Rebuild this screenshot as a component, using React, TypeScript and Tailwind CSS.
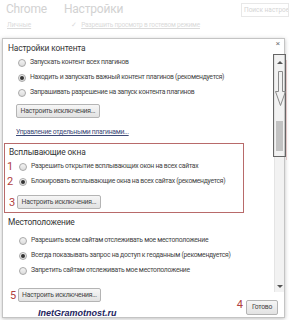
import React from "react";

const F = { fontFamily: 'Roboto, "Noto Sans", sans-serif' };

function Radio({ on }: { on?: boolean }) {
  return (
    <span className="w-[8px] h-[8px] rounded-full border border-[#a8a8a8] bg-gradient-to-b from-[#f4f4f4] to-[#dcdcdc] flex items-center justify-center shrink-0">
      {on && <span className="w-[4px] h-[4px] rounded-full bg-[#333]" />}
    </span>
  );
}

function Num({ n, w }: { n?: string; w: string }) {
  return (
    <span className={"shrink-0 text-[11px] leading-none text-[#b04040] " + w}>{n ?? ""}</span>
  );
}

function Row({ text, on, num }: { text: string; on?: boolean; num?: string }) {
  return (
    <div className="h-[15px] flex items-center">
      <span className="w-[3px] shrink-0" />
      <Num n={num} w="w-[12px]" />
      <Radio on={on} />
      <span className="ml-[4px] text-[6.8px] tracking-[-0.28px] text-[#444] whitespace-nowrap">{text}</span>
    </div>
  );
}

function Btn({ text, className = "" }: { text: string; className?: string }) {
  return (
    <div
      className={
        "h-[14px] shrink-0 border border-[#b4b4b4] rounded-[2px] bg-gradient-to-b from-[#f6f6f6] to-[#e2e2e2] flex items-center justify-center text-[6.8px] tracking-[-0.25px] text-[#444] whitespace-nowrap " +
        className
      }
    >
      {text}
    </div>
  );
}

export default function App() {
  return (
    <div className="w-[289px] h-[320px] bg-white overflow-hidden relative" style={F}>
      {/* background page */}
      <div className="h-[38px] relative">
        <div className="flex items-center h-[17px] pt-[1px]">
          <span className="ml-[6px] text-[12px] tracking-[-0.2px] text-[#d2d2d2]">Chrome</span>
          <span className="ml-[17px] text-[12px] tracking-[-0.2px] text-[#d2d2d2]">Настройки</span>
          <div className="ml-auto mt-[1px] w-[48px] h-[14px] border border-[#e8e8e8] text-[6.5px] leading-[12px] text-[#d4d4d4] pl-[2px] whitespace-nowrap overflow-hidden">
            Поиск настроек
          </div>
        </div>
        <div className="flex items-center h-[14px] mt-[2px]">
          <span className="ml-[7px] text-[6.5px] text-[#dadada] underline">Личные</span>
          <span className="ml-[40px] text-[6.5px] text-[#dadada]">✓</span>
          <span className="ml-[4px] text-[6.5px] tracking-[-0.2px] text-[#dadada] underline">Разрешить просмотр в гостевом режиме</span>
        </div>
      </div>
      <div className="absolute left-[286px] top-[60px] w-[1px] h-[100px] bg-[#f0d4d4]" />

      {/* dialog */}
      <div className="ml-[2px] w-[283px] h-[280px] border border-[#c4c4c4] bg-white shadow-[0_1px_4px_rgba(0,0,0,0.25)] flex flex-col relative">
        <div className="h-[16px] flex items-start">
          <span className="ml-[5px] mt-[2px] text-[8.4px] tracking-[-0.15px] leading-[14px] text-[#333]">Настройки контента</span>
          <span className="ml-auto mr-[4px] text-[8px] leading-[10px] text-[#777]">×</span>
        </div>
        <div className="flex">
          <div className="flex-1 flex flex-col">
            <div>
              <Row text="Запускать контент всех плагинов" />
              <Row text="Находить и запускать важный контент плагинов (рекомендуется)" on />
              <Row text="Запрашивать разрешение на запуск контента плагинов" />
            </div>
            <Btn text="Настроить исключения..." className="ml-[13px] mt-[4px] w-[84px]" />
            <span className="ml-[13px] mt-[8px] text-[6.8px] tracking-[-0.28px] leading-[12px] text-[#3c4a78] underline whitespace-nowrap">
              Управление отдельными плагинами...
            </span>
            <div className="ml-[1px] mt-[5px] w-[240px] border border-[#b86a6a] pb-[3px]">
              <div className="ml-[4px] mt-[1px] text-[8.4px] tracking-[-0.15px] leading-[14px] text-[#333]">Всплывающие окна</div>
              <div className="-ml-[1px]">
                <Row num="1" text="Разрешить открытие всплывающих окон на всех сайтах" />
                <Row num="2" on text="Блокировать всплывающие окна на всех сайтах (рекомендуется)" />
              </div>
              <div className="flex items-center mt-[6px]">
                <span className="w-[4px] shrink-0" />
                <Num n="3" w="w-[8px]" />
                <Btn text="Настроить исключения..." className="w-[84px]" />
              </div>
            </div>
            <div className="ml-[5px] mt-[2px] text-[8.4px] tracking-[-0.15px] leading-[14px] text-[#333]">Местоположение</div>
            <div className="mt-[4px] ml-[1px]">
              <Row text="Разрешить всем сайтам отслеживать мое местоположение" />
              <Row on text="Всегда показывать запрос на доступ к геоданным (рекомендуется)" />
              <Row text="Запретить сайтам отслеживать мое местоположение" />
            </div>
            <div className="flex items-center mt-[10px]">
              <span className="w-[7px] shrink-0" />
              <Num n="5" w="w-[8px]" />
              <Btn text="Настроить исключения..." className="w-[83px]" />
            </div>
          </div>
          {/* scrollbar */}
          <div className="w-[10px] h-[237px] bg-[#f2f2f2] border-l border-[#e4e4e4] flex flex-col items-center relative">
            <span className="mt-[6px] w-0 h-0 border-l-[3px] border-r-[3px] border-b-[3px] border-l-transparent border-r-transparent border-b-[#555]" />
            <div className="mt-[57px] w-[7px] h-[30px] bg-[#c2c2c2]" />
            <span className="mt-auto mb-[4px] w-0 h-0 border-l-[3px] border-r-[3px] border-t-[3px] border-l-transparent border-r-transparent border-t-[#555]" />
            <div className="absolute left-[-2px] top-[-1px] w-[13px] h-[103px] border border-[#666]" />
            <svg className="absolute left-[0px] top-[16px]" width="11" height="36" viewBox="0 0 11 36">
              <path d="M3.5 0.5 H7.5 V20.5 H10.5 L5.5 34.5 L0.5 20.5 H3.5 Z" fill="none" stroke="#8a8a8a" strokeWidth="1" />
            </svg>
          </div>
        </div>
        <div className="flex items-start -mt-[3px] h-[18px]">
          <span className="ml-[35px] mt-[7px] text-[9px] leading-[14px] font-semibold italic text-[#24245e]" style={{ fontFamily: '"Liberation Sans", Arial, sans-serif' }}>
            InetGramotnost.ru
          </span>
          <span className="ml-auto mt-[0px] text-[11px] leading-none text-[#b04040]">4</span>
          <Btn text="Готово" className="ml-[3px] mr-[6px] mt-[1px] w-[32px] h-[15px]" />
        </div>
      </div>
    </div>
  );
}
